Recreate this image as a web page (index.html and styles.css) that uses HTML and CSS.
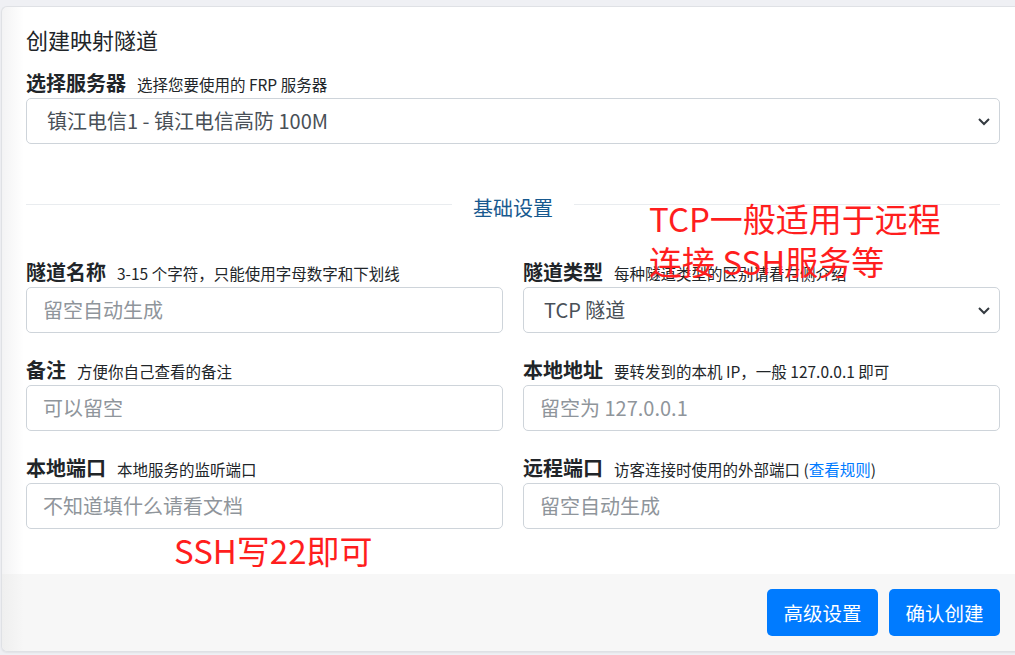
FILE: index.html
```html
<!DOCTYPE html>
<html lang="zh">
<head>
<meta charset="utf-8">
<title>创建映射隧道</title>
<link rel="stylesheet" href="styles.css">
</head>
<body>
<div class="card">
  <div class="card-body">
    <h5 class="card-title">创建映射隧道</h5>
    <div class="field">
      <label class="label"><b>选择服务器</b><small>选择您要使用的 FRP 服务器</small></label>
      <div class="select">
        <span>镇江电信1 - 镇江电信高防 100M</span>
        <svg class="chev" width="14" height="10" viewBox="0 0 14 10"><polyline points="2,3 7,8 12,3" fill="none" stroke="#343a40" stroke-width="2"/></svg>
      </div>
    </div>
    <div class="divider"><span class="line"></span><span class="divider-text">基础设置</span><span class="line"></span></div>
    <div class="grid">
      <div class="field">
        <label class="label"><b>隧道名称</b><small>3-15 个字符，只能使用字母数字和下划线</small></label>
        <div class="input placeholder">留空自动生成</div>
      </div>
      <div class="field">
        <label class="label"><b>隧道类型</b><small>每种隧道类型的区别请看右侧介绍</small></label>
        <div class="select">
          <span>TCP 隧道</span>
          <svg class="chev" width="14" height="10" viewBox="0 0 14 10"><polyline points="2,3 7,8 12,3" fill="none" stroke="#343a40" stroke-width="2"/></svg>
        </div>
      </div>
      <div class="field">
        <label class="label"><b>备注</b><small>方便你自己查看的备注</small></label>
        <div class="input placeholder">可以留空</div>
      </div>
      <div class="field">
        <label class="label"><b>本地地址</b><small>要转发到的本机 IP，一般 127.0.0.1 即可</small></label>
        <div class="input placeholder">留空为 127.0.0.1</div>
      </div>
      <div class="field">
        <label class="label"><b>本地端口</b><small>本地服务的监听端口</small></label>
        <div class="input placeholder">不知道填什么请看文档</div>
      </div>
      <div class="field">
        <label class="label"><b>远程端口</b><small>访客连接时使用的外部端口 (<a class="link">查看规则</a>)</small></label>
        <div class="input placeholder">留空自动生成</div>
      </div>
    </div>
  </div>
  <div class="card-footer">
    <button class="btn">高级设置</button>
    <button class="btn">确认创建</button>
  </div>
  <div class="note note-tcp">TCP一般适用于远程<br>连接 SSH服务等</div>
  <div class="note note-ssh">SSH写22即可</div>
</div>
</body>
</html>
```

FILE: styles.css
```css
html, body {
  margin: 0;
  padding: 0;
  overflow: hidden;
  height: 655px;
}
body {
  background: #eff0f4;
  font-family: "Noto Sans CJK SC", "Noto Sans", sans-serif;
  color: #212529;
}
.card {
  position: relative;
  margin: 6px 0 0 1px;
  width: 1022px;
  border: 1px solid #dfe1e5;
  border-right: none;
  border-radius: 6px 0 0 6px;
  background: linear-gradient(90deg, #f3f3f4 0, #ffffff 22px);
  box-shadow: 0 1px 2px rgba(0,0,0,0.06);
}
.card-body {
  padding: 19px 24px 20px 24px;
}
.card-title {
  margin: 0 0 19px 0;
  font-size: 22px;
  line-height: 26px;
  font-weight: 400;
}
.field {
  display: flex;
  flex-direction: column;
}
.label {
  display: flex;
  align-items: baseline;
  gap: 11px;
  height: 24px;
  margin-bottom: 3px;
  line-height: 24px;
  white-space: nowrap;
  overflow: visible;
}
.label b {
  font-size: 20px;
  line-height: 24px;
  font-weight: 700;
}
.label small {
  font-size: 15.5px;
  line-height: 24px;
  color: #212529;
}
.link {
  color: #007bff;
}
.select, .input {
  box-sizing: border-box;
  height: 46px;
  border: 1px solid #ced4da;
  border-radius: 5px;
  background: #fff;
  display: flex;
  align-items: center;
  font-size: 20px;
  line-height: 24px;
}
.select {
  justify-content: space-between;
  padding: 0 8px 0 20px;
  color: #495057;
}
.input {
  padding: 0 16px;
}
.placeholder {
  color: #8f959b;
}
.chev {
  flex: none;
}
.divider {
  display: flex;
  align-items: flex-start;
  margin: 51px 0 39px 0;
}
.line {
  flex: 1;
  height: 1px;
  margin-top: 9px;
  background: #e9ecef;
}
.divider-text {
  padding: 0 21px;
  font-size: 20px;
  line-height: 26px;
  color: #17598f;
}
.grid {
  display: grid;
  grid-template-columns: 1fr 1fr;
  column-gap: 20px;
  row-gap: 25px;
}
.card-footer {
  display: flex;
  justify-content: flex-end;
  gap: 11px;
  padding: 15px 24px 15px 24px;
  margin-top: 25px;
  background: linear-gradient(90deg, #efefef 0, #f7f7f7 22px);
  border-radius: 0 0 0 6px;
}
.btn {
  box-sizing: border-box;
  width: 111px;
  height: 47px;
  border: none;
  border-radius: 5px;
  background: #007bff;
  color: #fff;
  font-family: "Noto Sans CJK SC", sans-serif;
  font-size: 19.5px;
  padding: 0;
}
.note {
  position: absolute;
  color: #ff1e1e;
  font-family: "Noto Sans CJK SC", sans-serif;
  font-size: 33px;
  line-height: 43px;
  white-space: nowrap;
}
.note-tcp {
  left: 647px;
  top: 190px;
}
.note-ssh {
  left: 172px;
  top: 522px;
}
```
